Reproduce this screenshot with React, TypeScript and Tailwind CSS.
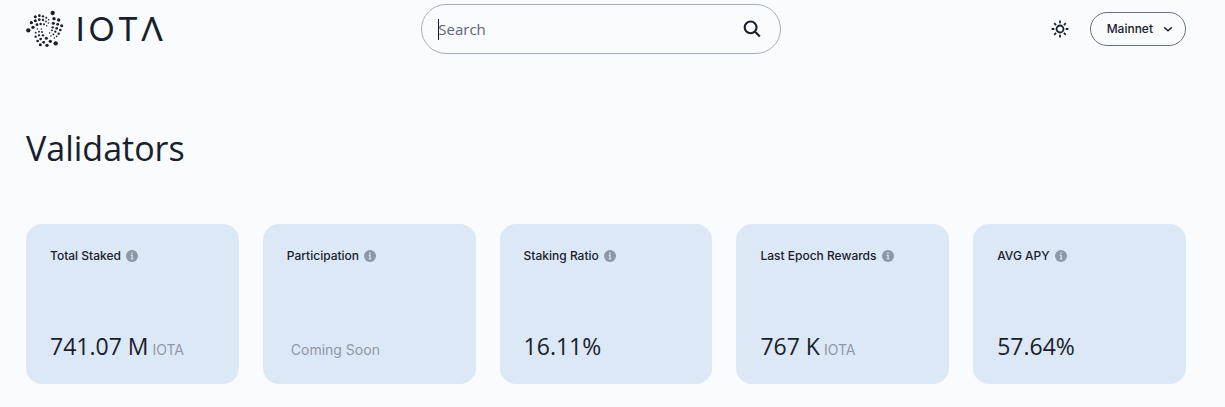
const dots: [number, number, number][] = [
  [97, 27, 6.5], [24, 79, 6.5], [106, 118, 6.5],
  [45, 38, 4.5], [57, 35, 4], [68, 37, 3.5], [78, 41, 3], [85, 47, 2.3],
  [33, 56, 5], [45, 50, 4.5], [57, 47, 4], [68, 48, 3.5], [77, 52, 2.8], [84, 57, 2.2],
  [38, 70, 5], [50, 62, 4.2], [61, 60, 3.6], [71, 61, 3], [79, 65, 2.3],
  [101, 44, 5], [115, 48, 5], [124, 65, 4.5], [112, 61, 4.3], [99, 58, 4.5],
  [97, 70, 3.5], [109, 73, 4], [120, 78, 4], [115, 89, 3.5], [105, 83, 3.4],
  [95, 79, 2.8], [88, 87, 2.3], [99, 91, 2.8], [109, 97, 2.8], [102, 102, 2.2], [92, 96, 2.2],
  [51, 75, 2.3], [46, 86, 2.8], [46, 98, 3.5], [52, 111, 4], [60, 122, 4.5],
  [56, 83, 2.8], [56, 94, 3.4], [61, 105, 4], [70, 115, 4.3], [80, 124, 5],
  [63, 75, 2.2], [65, 84, 2.8], [68, 94, 3.5], [78, 103, 4.5], [90, 112, 5],
];

const stats = [
  { label: 'Total Staked', value: '741.07 M', unit: 'IOTA' },
  { label: 'Participation', value: '', unit: 'Coming Soon' },
  { label: 'Staking Ratio', value: '16.11%', unit: '' },
  { label: 'Last Epoch Rewards', value: '767 K', unit: 'IOTA' },
  { label: 'AVG APY', value: '57.64%', unit: '' },
];

function Logo() {
  return (
    <a href="#" aria-label="IOTA" className="flex w-[137px] items-center justify-between">
      <svg viewBox="17 18 114 114" className="size-[38px]" fill="currentColor" aria-hidden="true">
        {dots.map(([cx, cy, r]) => (
          <circle key={`${cx}-${cy}`} cx={cx} cy={cy} r={r} />
        ))}
      </svg>
      <span className="flex gap-1 font-['Lato'] text-[32px] leading-9">
        <span>I</span>
        <span>O</span>
        <span>T</span>
        <span>Λ</span>
      </span>
    </a>
  );
}

function SunIcon() {
  return (
    <svg viewBox="0 0 18 18" className="size-[18px]" fill="none" stroke="currentColor" strokeWidth="1.8" aria-hidden="true">
      <circle cx="9" cy="9" r="3.5" />
      <path d="M9 .6v2.7M9 14.7v2.7M.6 9h2.7M14.7 9h2.7M3.2 3.2l1.9 1.9M12.9 12.9l1.9 1.9M3.2 14.8l1.9-1.9M12.9 5.1l1.9-1.9" />
    </svg>
  );
}

function InfoIcon() {
  return (
    <svg viewBox="0 0 12 12" className="size-3" aria-hidden="true">
      <circle cx="6" cy="6" r="6" fill="#8f97a5" />
      <path d="M6 2.6v1.4M4.8 5.4H6.1V9M4.8 9h2.5" stroke="#dde8f7" strokeWidth="1.2" fill="none" />
    </svg>
  );
}

export default function App() {
  return (
    <div className="min-h-screen bg-[#f9fbfe] pr-[39px] pb-6 pl-[26px] font-['Inter',sans-serif] text-[#18202c]">
      <header className="flex items-center justify-between pt-1">
        <Logo />
        <form role="search" className="flex h-[50px] w-[360px] items-center rounded-full border border-[#a3b0c2] pr-[19px] pl-4">
          <span className="-mr-px h-[21px] w-px bg-[#171d26]" />
          <input
            type="text"
            aria-label="Search"
            placeholder="Search"
            className="min-w-0 flex-1 bg-transparent font-['Open_Sans',sans-serif] text-[15px] outline-none placeholder:text-[#5a6675]"
          />
          <button type="button" aria-label="Submit search">
            <svg viewBox="0 0 18 18" className="size-[18px]" fill="none" stroke="currentColor" strokeWidth="2.1" aria-hidden="true">
              <circle cx="7.6" cy="7.4" r="5.9" />
              <path d="M11.8 11.6l5 5" />
            </svg>
          </button>
        </form>
        <div className="flex items-center gap-[10px]">
          <button type="button" aria-label="Toggle theme" className="flex size-10 items-center justify-center">
            <SunIcon />
          </button>
          <button type="button" className="flex h-[34px] items-center gap-[10px] rounded-full border border-[#66728a] pr-3 pl-4 text-xs font-medium">
            Mainnet
            <svg viewBox="0 0 10 10" className="size-[10px]" fill="none" stroke="currentColor" strokeWidth="1.5" aria-hidden="true">
              <path d="M1.2 3.2L5 6.8l3.8-3.6" />
            </svg>
          </button>
        </div>
      </header>

      <main>
        <h1 className="mt-[70px] font-['Open_Sans',sans-serif] text-[34px] leading-12 font-normal">Validators</h1>
        <section className="mt-[52px] grid grid-cols-5 gap-6">
          {stats.map((stat) => (
            <article key={stat.label} className="flex h-40 flex-col justify-between rounded-2xl bg-[#dde8f7] p-6">
              <div className="flex items-center gap-[5px]">
                <h2 className="text-xs leading-4 font-medium whitespace-nowrap">{stat.label}</h2>
                <InfoIcon />
              </div>
              <p className="font-['Open_Sans',sans-serif] text-[23px] leading-7 whitespace-nowrap">
                {stat.value}
                {stat.unit && (
                  <span className="ml-1 font-['Inter',sans-serif] text-sm leading-4 text-[#8f97a5]">{stat.unit}</span>
                )}
              </p>
            </article>
          ))}
        </section>
      </main>
    </div>
  );
}
